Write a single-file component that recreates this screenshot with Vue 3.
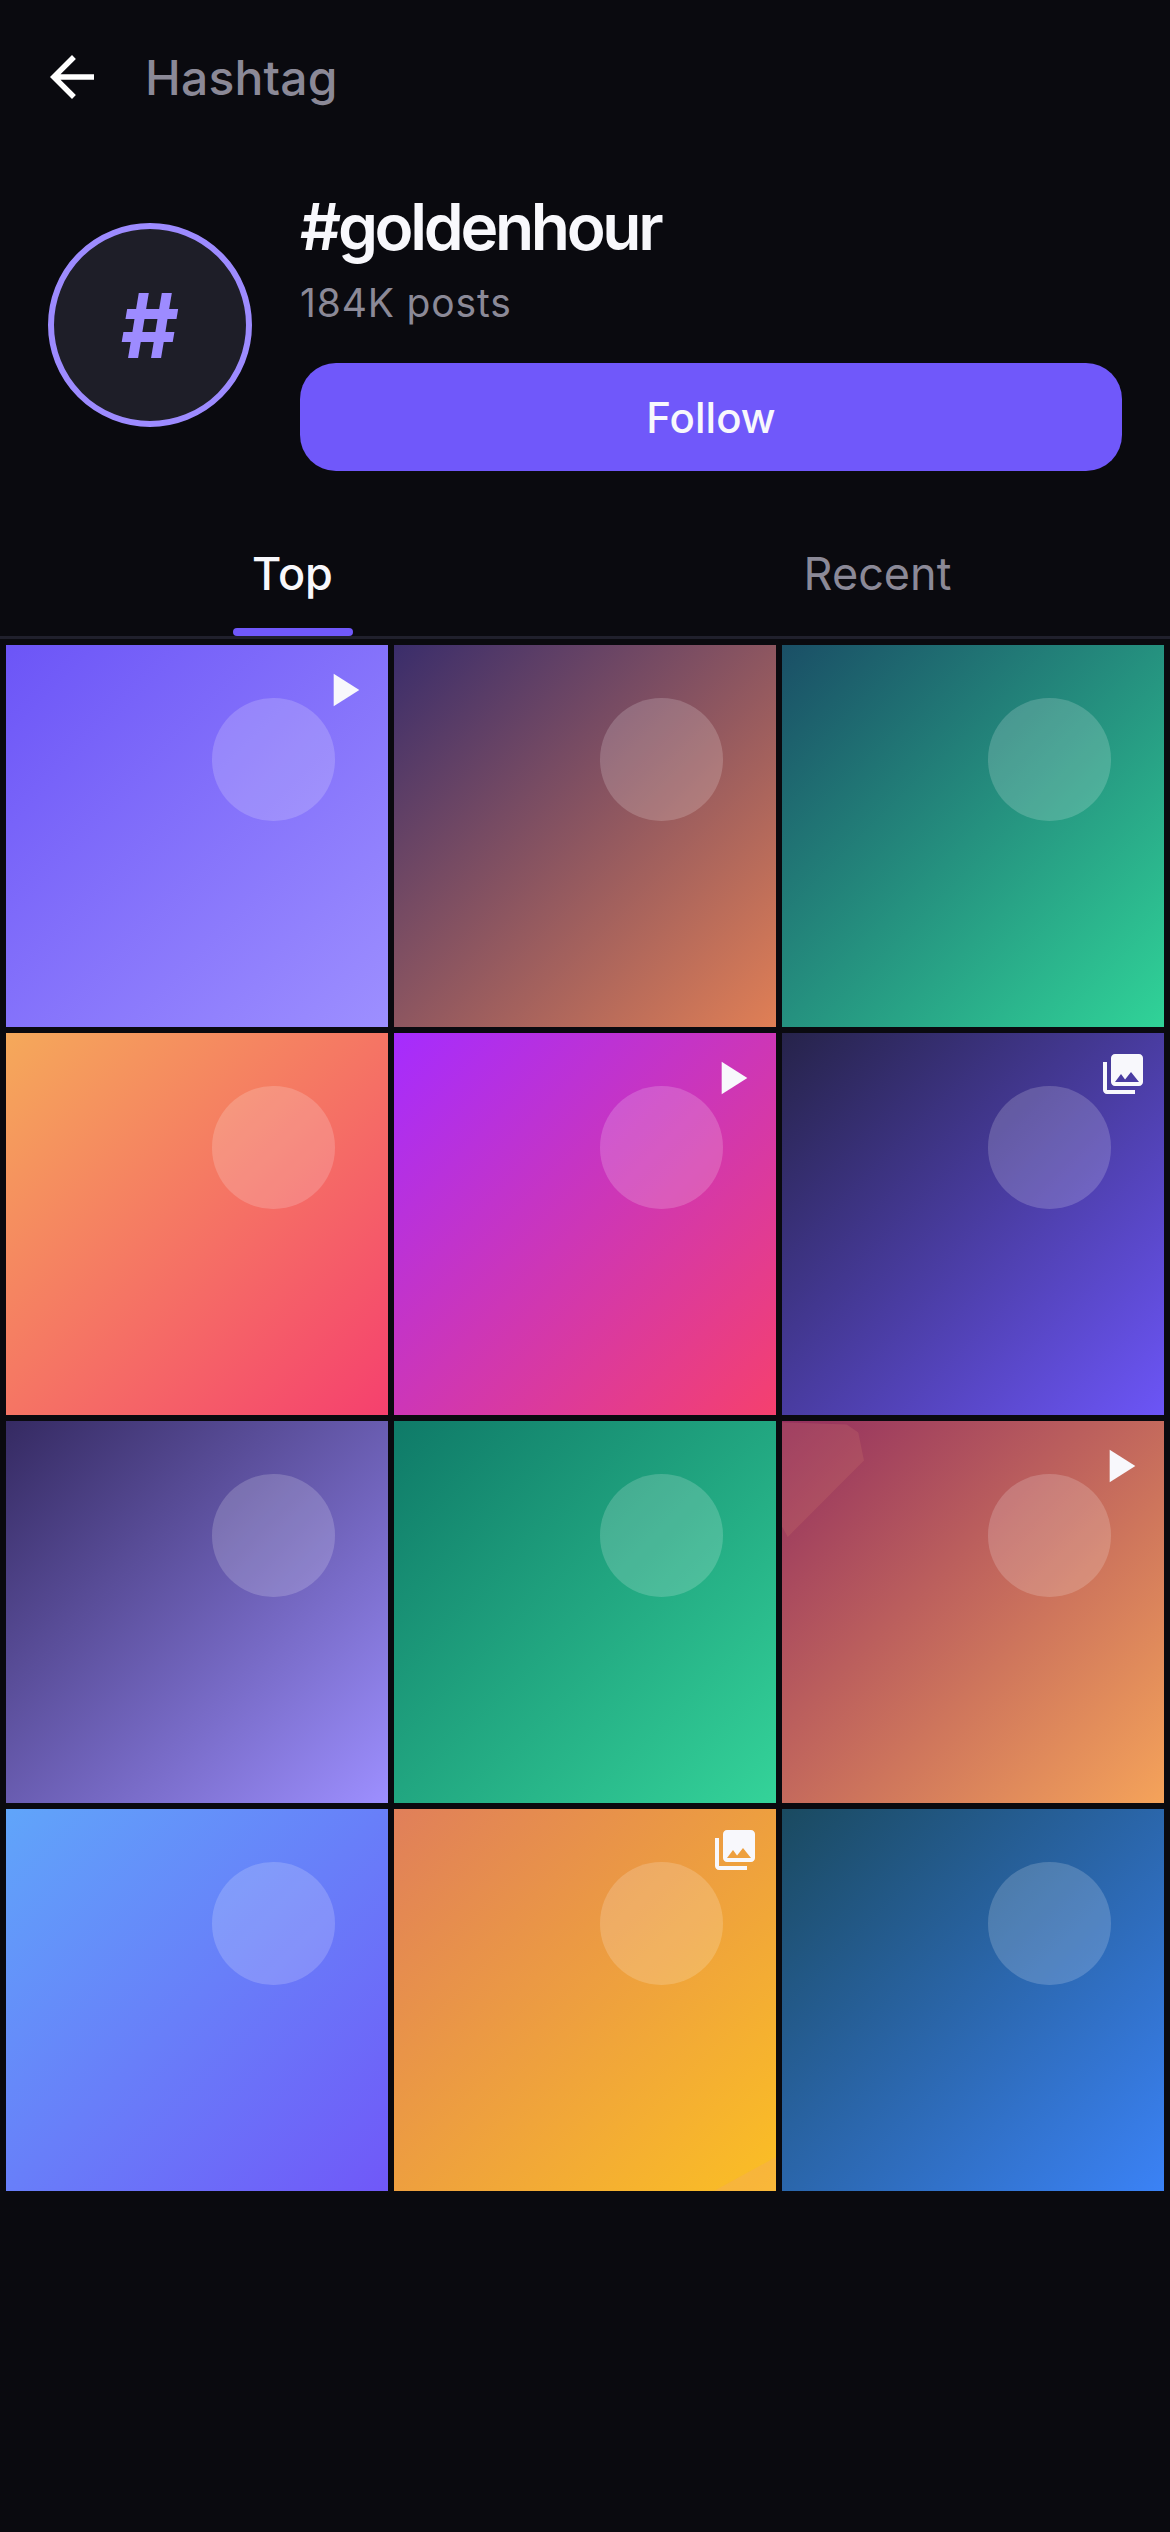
<script setup>
import { ref } from 'vue'

const activeTab = ref('Top')
const tabs = ['Top', 'Recent']

const posts = [
  { from: '#6c55f7', to: '#9d8fff', badge: 'play' },
  { from: '#3a2d6b', to: '#e07f55' },
  { from: '#1a4f66', to: '#30d398' },
  { from: '#f5a95a', to: '#f5406e' },
  { from: '#a52cff', to: '#f5406e', badge: 'play' },
  { from: '#26234a', to: '#6c55f7', badge: 'album' },
  { from: '#352a62', to: '#9d8fff' },
  { from: '#0f7a68', to: '#34d399' },
  { from: '#93305f', to: '#f5a35a', badge: 'play', smear: 'corner' },
  { from: '#60a5fa', to: '#7058f8' },
  { from: '#e07f5a', to: '#fbbf24', badge: 'album', smear: 'edge' },
  { from: '#1a4a60', to: '#3b82f6' },
]
</script>

<template>
  <div class="screen">
    <header class="topbar">
      <button class="back" aria-label="Back">
        <svg width="66" height="66" viewBox="0 0 24 24" fill="#fff">
          <path d="M20 11H7.83l5.59-5.59L12 4l-8 8 8 8 1.41-1.41L7.83 13H20v-2z" />
        </svg>
      </button>
      <span class="topbar-title">Hashtag</span>
    </header>

    <section class="profile">
      <div class="avatar">#</div>
      <div class="profile-info">
        <h1 class="tag">#goldenhour</h1>
        <p class="count">184K posts</p>
        <button class="follow">Follow</button>
      </div>
    </section>

    <nav class="tabs">
      <button
        v-for="tab in tabs"
        :key="tab"
        class="tab"
        :class="{ active: tab === activeTab }"
        @click="activeTab = tab"
      >
        {{ tab }}
      </button>
    </nav>

    <div class="grid">
      <div
        v-for="(post, i) in posts"
        :key="i"
        class="cell"
        :style="{ background: `linear-gradient(135deg, ${post.from}, ${post.to})` }"
      >
        <span class="blob" />
        <span v-if="post.smear" class="smear" :class="post.smear" />
        <svg v-if="post.badge === 'play'" class="badge" viewBox="0 0 24 24" fill="#f8f8fc">
          <path d="M8 5v14l11-7z" />
        </svg>
        <svg v-else-if="post.badge === 'album'" class="badge album" viewBox="0 0 24 24" fill="#f8f8fc">
          <path d="M22 16V4c0-1.1-.9-2-2-2H8c-1.1 0-2 .9-2 2v12c0 1.1.9 2 2 2h12c1.1 0 2-.9 2-2zm-11-4l2.03 2.71L16 11l4 5H8l3-4zM2 6v14c0 1.1.9 2 2 2h14v-2H4V6H2z" />
        </svg>
      </div>
    </div>
  </div>
</template>

<style>
html, body { background: #0a0a0f; }
</style>

<style scoped>
.screen {
  width: 1170px;
  min-height: 2532px;
  background: #0a0a0f;
  color: #f8f8fc;
  font-family: Inter, "Liberation Sans", sans-serif;
}
button {
  font-family: inherit;
  border: 0;
  background: none;
  padding: 0;
}
.topbar {
  display: flex;
  align-items: center;
  gap: 40px;
  height: 154px;
  padding: 0 39px;
  box-sizing: border-box;
}
.back {
  display: flex;
}
.topbar-title {
  font-size: 48px;
  font-weight: 500;
  letter-spacing: 0.2px;
  color: #8b8997;
}
.profile {
  display: flex;
  align-items: flex-start;
  gap: 48px;
  padding: 33px 48px 0;
}
.avatar {
  flex: none;
  width: 204px;
  height: 204px;
  margin-top: 36px;
  box-sizing: border-box;
  border: 6px solid #9d8bff;
  border-radius: 50%;
  background: #1e1e28;
  color: #9d8bff;
  display: flex;
  align-items: center;
  justify-content: center;
  font-size: 90px;
  font-weight: 700;
}
.profile-info {
  flex: 1;
}
.tag {
  margin: 0;
  font-size: 64px;
  font-weight: 600;
  line-height: 80px;
  letter-spacing: -3.3px;
}
.count {
  margin: 12px 0 0;
  font-size: 39px;
  line-height: 48px;
  letter-spacing: 0.85px;
  color: #8b8997;
}
.follow {
  display: block;
  width: 100%;
  height: 108px;
  margin-top: 36px;
  border-radius: 36px;
  background: #7058fa;
  color: #f8f8fc;
  font-size: 42px;
  font-weight: 500;
}
.tabs {
  display: flex;
  margin-top: 48px;
  border-bottom: 3px solid #20202c;
}
.tab {
  position: relative;
  flex: 1;
  height: 117px;
  padding-bottom: 8px;
  font-size: 45px;
  font-weight: 400;
  color: #8b8997;
}
.tab.active {
  color: #f8f8fc;
  font-weight: 500;
}
.tab.active::after {
  content: "";
  position: absolute;
  left: 50%;
  bottom: 0;
  width: 120px;
  height: 8px;
  margin-left: -60px;
  border-radius: 4px;
  background: #7058fa;
}
.grid {
  display: grid;
  grid-template-columns: repeat(3, 1fr);
  gap: 6px;
  padding: 6px;
}
.cell {
  position: relative;
  aspect-ratio: 1;
  overflow: hidden;
}
.blob {
  position: absolute;
  left: 54%;
  top: 14%;
  width: 32%;
  height: 32%;
  border-radius: 50%;
  background: rgba(255, 255, 255, 0.18);
}
.smear {
  position: absolute;
}
.smear.corner {
  left: 0;
  top: 0;
  width: 82px;
  height: 116px;
  background: rgba(214, 130, 112, 0.2);
  clip-path: polygon(0 1%, 79% 3%, 93% 10%, 100% 34%, 7% 100%, 0 91%);
}
.smear.edge {
  right: 0;
  bottom: 0;
  width: 62px;
  height: 34px;
  background: rgba(240, 160, 130, 0.22);
  clip-path: polygon(100% 0, 100% 100%, 0 100%);
}
.badge {
  position: absolute;
  top: 17px;
  right: 17px;
  width: 56px;
  height: 56px;
}
.badge.album {
  width: 48px;
  height: 48px;
}
</style>
